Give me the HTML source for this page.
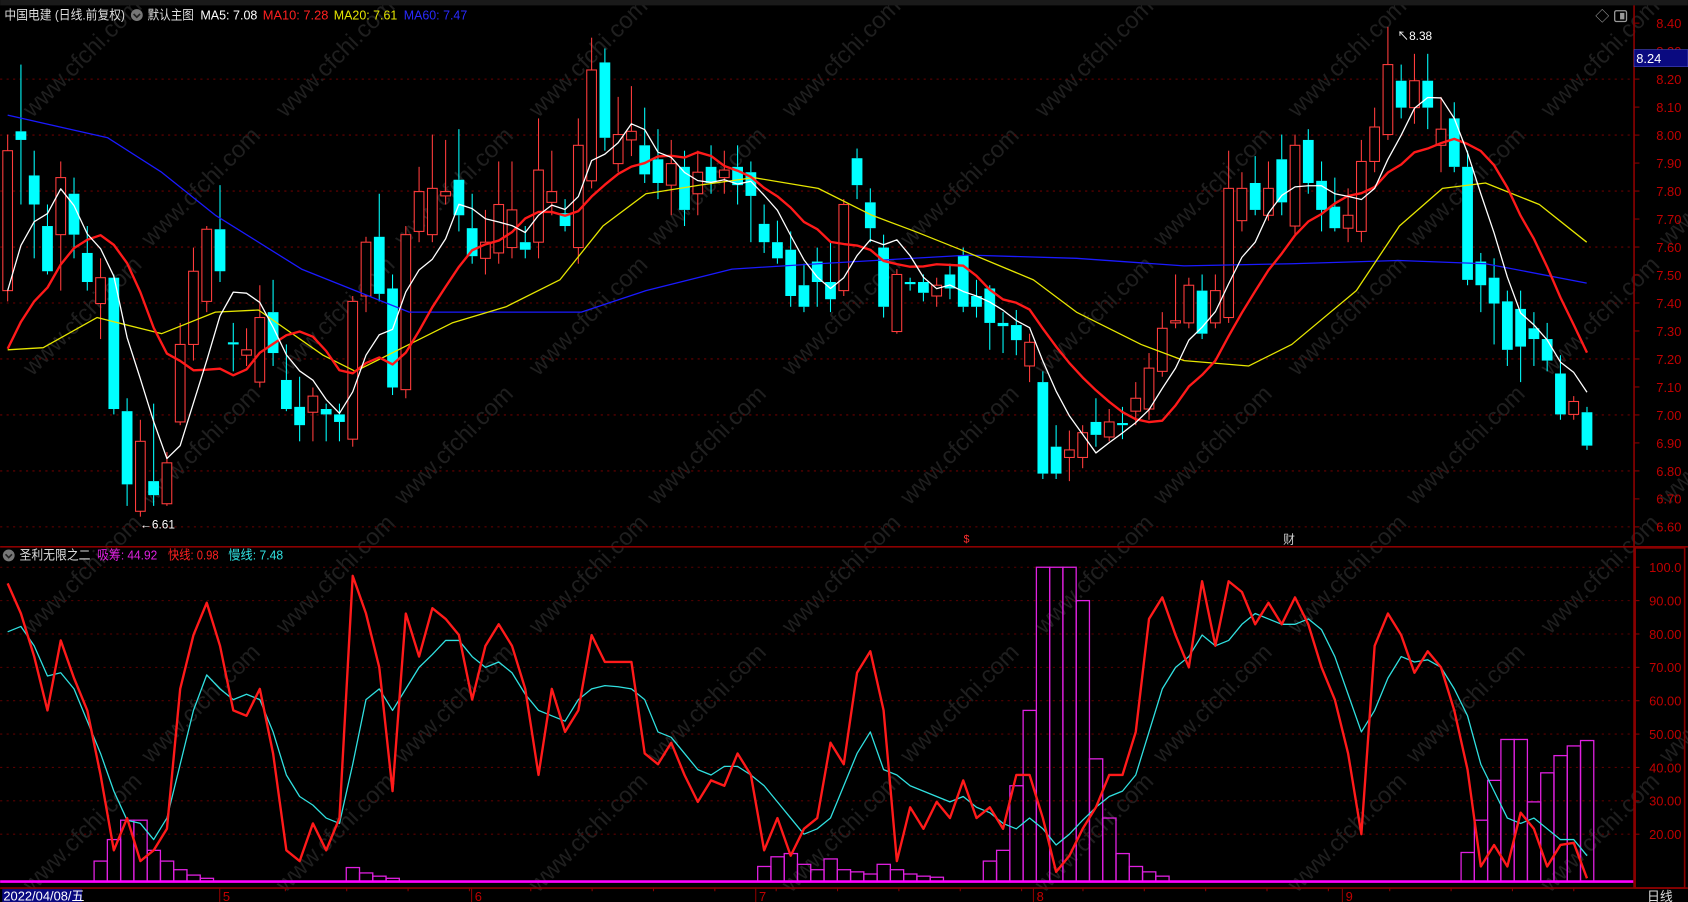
<!DOCTYPE html>
<html><head><meta charset="utf-8"><style>
html,body{margin:0;padding:0;background:#000;overflow:hidden}
svg{display:block}
text{font-family:"Liberation Sans","Noto Sans CJK SC",sans-serif}
</style></head><body>
<svg id="s" width="1688" height="902" viewBox="0 0 1568 838" xmlns="http://www.w3.org/2000/svg">
<rect width="1568" height="838" fill="#000"/>
<g id="wm"></g>
<g id="grid"></g>
<g id="bars"></g>
<g id="cd"></g>
<g id="lines"></g>
<g id="axis"></g>
</svg>
<script>
const NS="http://www.w3.org/2000/svg";
function el(p,t,a,txt){const e=document.createElementNS(NS,t);for(const k in a)e.setAttribute(k,a[k]);if(txt!=null)e.textContent=txt;document.getElementById(p).appendChild(e);return e;}
// watermarks
for(let r=0;r<7;r++)for(let c=0;c<8;c++){const x=30+c*235+(r%2)*110,y=110+r*120;
el('wm','text',{x:x,y:y,fill:'#1f1f1f','font-size':22,transform:`rotate(-45 ${x} ${y})`},'www.cfchi.com');}
// grid
for(let p=8.2;p>=6.59;p-=0.2){const y=21.5+(8.4-p)*260;el('grid','line',{x1:0,x2:1518,y1:y,y2:y,stroke:'#6a0000','stroke-dasharray':'2,4'});}
for(let v=100;v>=20;v-=10){const y=527+(100-v)*3.1;el('grid','line',{x1:0,x2:1518,y1:y,y2:y,stroke:'#5a0000','stroke-dasharray':'2,4'});}
const C=[['r',140,270,125,280],['c',122,130,60,190],['c',163,190,140,240],['c',210,252,190,255],['r',165,218,150,270],['c',180,218,165,240],['c',235,262,210,270],['r',258,282,240,315],['c',258,380,255,385],['c',382,450,370,470],
['r',410,475,390,480],['c',447,460,375,470],['r',430,468,420,470],['r',320,392,300,395],['r',252,320,230,335],['r',213,280,210,290],['c',213,252,172,262],['c',318,320,300,345],['r',325,330,305,340],['r',295,355,265,360],
['c',290,328,260,340],['c',353,380,320,382],['c',378,395,350,410],['r',368,383,360,410],['c',380,385,375,410],['c',385,392,375,410],['r',280,408,275,415],['r',225,275,220,290],['c',220,273,180,280],['c',268,360,255,367],
['r',218,362,210,370],['r',178,215,155,225],['r',175,218,125,225],['r',178,182,130,190],['c',167,200,120,215],['c',212,238,180,245],['r',225,240,195,255],['r',190,235,150,245],['r',195,230,150,240],['c',225,232,210,240],
['r',158,225,110,240],['r',178,188,140,200],['c',198,210,185,215],['r',135,230,110,245],['r',65,168,35,175],['c',58,128,45,140],['r',125,152,90,160],['r',122,130,80,145],['c',135,162,100,170],['c',148,170,120,185],
['r',152,172,130,200],['c',155,195,140,210],['r',160,180,140,200],['c',155,170,135,180],['r',158,165,140,180],['c',155,172,135,190],['c',160,182,150,225],['c',208,225,190,235],['c',225,240,205,245],['c',232,275,215,285],
['c',265,285,245,290],['c',243,262,230,285],['c',262,278,225,290],['r',190,270,185,275],['c',147,172,138,185],['c',188,212,175,225],['c',230,285,218,295],['r',255,308,250,310],['c',262,264,258,270],['c',262,272,255,280],
['r',265,275,258,285],['c',255,268,245,278],['c',237,285,230,290],['c',275,285,260,295],['c',268,300,265,325],['c',300,303,290,328],['c',302,316,288,330],['r',318,340,310,355],['c',355,440,345,445],['c',415,440,395,445],
['r',418,425,400,447],['r',402,425,395,435],['c',392,404,370,415],['r',392,406,380,410],['c',393,395,378,408],['r',370,382,355,395],['r',342,380,328,390],['r',305,345,290,350],['r',298,300,255,305],['r',265,300,258,305],
['c',270,310,255,315],['r',270,300,255,305],['r',175,295,140,300],['r',175,205,160,215],['c',170,195,145,200],['r',175,200,150,205],['c',148,188,125,200],['r',135,210,125,218],['c',130,170,120,180],['c',168,195,150,215],
['c',192,212,165,215],['r',200,212,175,225],['r',150,215,130,225],['r',118,150,100,160],['r',60,125,25,130],['c',75,100,60,110],['r',75,100,50,115],['c',75,100,50,120],['r',120,135,90,160],['c',110,155,95,160],
['c',155,260,140,265],['c',243,265,235,290],['c',258,282,240,320],['c',280,325,270,340],['c',287,322,270,355],['c',305,315,290,340],['c',315,335,300,345],['c',347,385,330,390],['r',373,385,368,390],['c',383,414,378,418]];
const X=i=>7+i*12.33;
C.forEach((c,i)=>{const x=X(i),cl=c[0]=='r'?'#ff3c3c':'#00ffff';
el('cd','line',{x1:x,x2:x,y1:c[3],y2:c[1],stroke:cl});el('cd','line',{x1:x,x2:x,y1:c[2],y2:c[4],stroke:cl});
const h=Math.max(1,c[2]-c[1]);
if(c[0]=='r')el('cd','rect',{x:x-4.5,y:c[1],width:9,height:h,fill:'#000',stroke:cl});
else el('cd','rect',{x:x-5,y:c[1],width:10,height:h,fill:cl});});
const pre=[380,380,380,380,380,370,340,300,290,280];
const cls=pre.concat(C.map(c=>c[0]=='r'?c[1]:c[2]));
function ma(n){return C.map((c,i)=>{let s=0;for(let k=0;k<n;k++)s+=cls[i+10-k];return X(i)+','+(s/n).toFixed(1)}).join(' ');}
const pl=(pts,col,w)=>el('lines','polyline',{points:pts,fill:'none',stroke:col,'stroke-width':w,'stroke-linejoin':'round'});
pl('7,107 100,128 150,160 200,200 280,250 330,270 380,290 450,290 540,290 600,270 680,250 760,245 900,237 1000,240 1100,247 1200,245 1300,242 1380,245 1474,263','#1a1aff',1.2);
pl('7,325 40,323 90,295 150,310 200,290 240,288 300,330 330,345 380,320 420,300 470,285 520,260 560,210 600,180 650,172 700,165 760,175 810,200 850,215 900,235 960,260 1000,290 1060,320 1100,335 1160,340 1200,320 1260,270 1300,210 1340,175 1380,170 1430,190 1474,225','#e6e600',1.2);
pl(ma(10),'#ff1a1a',2.2);
pl(ma(5),'#ffffff',1.2);
const B={7:800,8:780,9:762,10:762,11:790,12:800,13:808,14:813,15:816,26:806,27:811,28:814,29:816,57:805,58:796,59:793,60:803,61:808,62:798,63:808,64:810,65:812,66:803,67:808,68:812,69:814,70:815,74:800,75:790,76:730,77:660,78:527,79:527,80:527,81:558,82:705,83:760,84:793,85:805,86:810,87:814,110:792,111:762,112:725,113:687,114:687,115:745,116:718,117:702,118:693,119:688};
for(const k in B){const x=X(+k)-6;el('bars','rect',{x:x,y:B[k],width:12.3,height:819-B[k],fill:'none',stroke:'#e020e0','stroke-width':1.2});}
el('bars','line',{x1:0,x2:1518,y1:819,y2:819,stroke:'#ff00ff','stroke-width':2.5});
const R=[542,570,610,660,595,630,660,720,790,760,800,790,770,640,590,560,600,660,665,640,700,790,800,765,790,760,535,570,620,735,570,610,565,575,590,650,600,580,600,640,720,640,680,660,590,615,615,615,700,710,690,720,745,725,730,700,720,790,760,795,770,760,690,710,625,605,660,800,750,770,745,760,725,760,750,770,720,720,760,810,795,770,750,720,720,680,575,555,590,620,540,600,540,550,580,560,580,555,580,620,650,700,775,600,570,590,625,605,620,660,715,805,785,805,755,770,805,785,783,816];
const Cy=[587,582,600,628,625,640,670,700,735,762,765,780,760,710,660,627,640,650,645,650,680,720,740,748,760,765,710,650,640,660,640,620,608,595,595,610,620,615,625,645,660,665,670,650,640,637,638,640,650,680,685,700,715,720,712,712,720,730,745,760,775,770,760,730,700,680,715,720,730,735,740,745,740,750,755,765,770,760,770,785,775,762,750,740,735,720,680,640,620,610,590,600,595,580,570,575,580,580,575,585,610,645,680,660,630,610,615,613,620,640,665,710,735,760,765,760,770,780,780,795];
pl(Cy.map((y,i)=>X(i)+','+y).join(' '),'#30e0e0',1.2);
pl(R.map((y,i)=>X(i)+','+y).join(' '),'#ff1a1a',2.2);
const A='axis';
el(A,'rect',{x:0,y:0,width:1568,height:5,fill:'#1a1a1a'});
el(A,'line',{x1:1518,x2:1518,y1:5,y2:825,stroke:'#8b0000','stroke-width':1.5});
el(A,'line',{x1:0,x2:1568,y1:508,y2:508,stroke:'#8b0000','stroke-width':1.5});
el(A,'line',{x1:0,x2:1568,y1:825,y2:825,stroke:'#8b0000','stroke-width':1.5});
el(A,'rect',{x:1519,y:509,width:46,height:316,fill:'none',stroke:'#8b0000','stroke-width':1.5});
for(let i=0;i<=18;i++){const p=8.4-i*0.1,y=21.5+i*26;el(A,'line',{x1:1518,x2:1523,y1:y,y2:y,stroke:'#8b0000'});
el(A,'text',{x:1562,y:y+4.5,fill:'#c00000','font-size':12,'text-anchor':'end'},p.toFixed(2));}
for(let v=100;v>=20;v-=10){const y=527+(100-v)*3.1;el(A,'line',{x1:1518,x2:1523,y1:y,y2:y,stroke:'#8b0000'});
el(A,'text',{x:1562,y:y+4.5,fill:'#c00000','font-size':12,'text-anchor':'end'},v==100?'100.0':v.toFixed(2));}
el(A,'rect',{x:1518,y:46,width:50,height:16,fill:'#0a0a80',stroke:'#5050c0','stroke-width':0.5});
el(A,'text',{x:1520,y:58.5,fill:'#fff','font-size':12},'8.24');
el(A,'text',{x:1482,y:20,fill:'#999','font-size':13},'◇');
el(A,'rect',{x:1500,y:10,width:11,height:10,fill:'none',stroke:'#999','stroke-width':1.2,rx:1.5});
el(A,'rect',{x:1505,y:12,width:4,height:6,fill:'#999'});
const T=(x,y,w,s,c)=>el(A,'text',{x:x,y:y,fill:c,'font-size':12,textLength:w,lengthAdjust:'spacingAndGlyphs'},s);
T(4,18,112,'中国电建 (日线.前复权)','#ddd');
el(A,'circle',{cx:127,cy:14,r:5.5,fill:'#777'});
el(A,'path',{d:'M124 13 L127 16 L130 13',stroke:'#222',fill:'none','stroke-width':1.5});
T(137,18,43,'默认主图','#ddd');T(186,18,53,'MA5: 7.08','#fff');T(244,18,61,'MA10: 7.28','#ff2020');T(310,18,59,'MA20: 7.61','#e6e600');T(375,18,59,'MA60: 7.47','#2a2aff');
el(A,'circle',{cx:8,cy:516,r:5.5,fill:'#777'});
el(A,'path',{d:'M5 515 L8 518 L11 515',stroke:'#222',fill:'none','stroke-width':1.5});
T(18,520,66,'圣利无限之二','#ddd');T(90,520,56,'吸筹: 44.92','#e020e0');T(156,520,47,'快线: 0.98','#ff2020');T(212,520,51,'慢线: 7.48','#30e0e0');
el(A,'text',{x:130,y:491,fill:'#fff','font-size':11},'←6.61');
el(A,'text',{x:1298,y:37,fill:'#fff','font-size':11},'↖8.38');
el(A,'text',{x:895,y:504,fill:'#ff3030','font-size':10},'$');
el(A,'text',{x:1192,y:505,fill:'#ccc','font-size':11},'财');
el(A,'rect',{x:2,y:826,width:74,height:12,fill:'#0a0a80'});
el(A,'text',{x:3,y:836.5,fill:'#fff','font-size':12},'2022/04/08/五');
[[207,'5'],[441,'6'],[705,'7'],[963,'8'],[1250,'9']].forEach(d=>{el(A,'line',{x1:d[0]-3,x2:d[0]-3,y1:825,y2:838,stroke:'#8b0000'});el(A,'text',{x:d[0],y:837,fill:'#c00000','font-size':12},d[1]);});
for(let x=265;x<1500;x+=57)el(A,'line',{x1:x,x2:x,y1:825,y2:828,stroke:'#8b0000'});
el(A,'rect',{x:1518,y:826,width:50,height:12,fill:'#000'});
el(A,'text',{x:1530,y:837,fill:'#ddd','font-size':12},'日线');
</script>
</body></html>
